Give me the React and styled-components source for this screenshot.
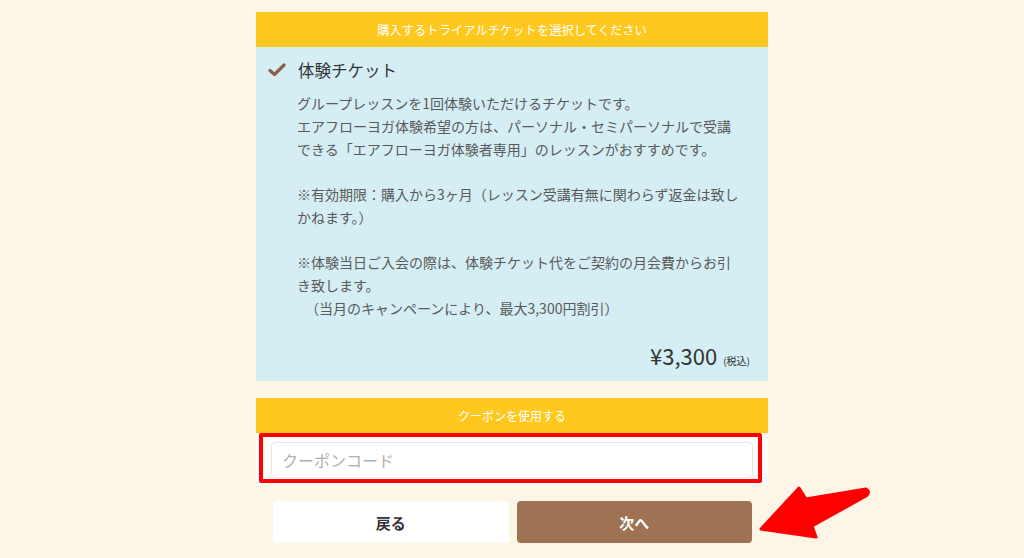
import React from "react";
import styled, { createGlobalStyle } from "styled-components";

const GlobalStyle = createGlobalStyle`
  html, body {
    margin: 0;
    padding: 0;
    background: #fdf6e6;
  }
  body {
    font-family: "Noto Sans CJK JP", "Noto Sans", sans-serif;
    color: #555;
  }
`;

const Page = styled.div`
  position: relative;
  width: 1024px;
  height: 558px;
  overflow: hidden;
  padding-top: 12px;
  box-sizing: border-box;
`;

const Column = styled.div`
  width: 512px;
  margin: 0 auto;
  display: flex;
  flex-direction: column;
`;

const SectionHead = styled.div`
  height: 35px;
  background: #ffc81f;
  color: #fff;
  font-size: ${(p) => (p.$small ? "12px" : "12.3px")};
  display: flex;
  align-items: center;
  justify-content: center;
  margin-top: ${(p) => (p.$gap ? "17px" : "0")};
`;

const TicketBody = styled.div`
  background: #d4eef3;
  padding: 11px 18px 11px 12px;
  display: flex;
  flex-direction: column;
`;

const TitleRow = styled.div`
  display: flex;
  align-items: center;
  gap: 12px;
  height: 24px;
`;

const CheckIcon = styled.svg`
  width: 18px;
  height: 16px;
  flex-shrink: 0;
`;

const Title = styled.div`
  font-size: 16.5px;
  color: #333;
  line-height: 24px;
`;

const Description = styled.div`
  margin: 10px 0 0 29px;
  font-size: 14px;
  line-height: 23px;
  color: #5a5a5a;
  white-space: nowrap;
`;

const Para = styled.p`
  margin: 0 0 22px;
  &:last-child {
    margin-bottom: 0;
  }
`;

const Indent = styled.span`
  padding-left: 8px;
`;

const PriceRow = styled.div`
  margin-top: 20px;
  height: 30px;
  display: flex;
  justify-content: flex-end;
  align-items: baseline;
  gap: 6px;
  color: #333;
  line-height: 30px;
  overflow: hidden;
`;

const Price = styled.span`
  font-size: 22px;
`;

const Tax = styled.span`
  font-size: 10px;
`;

const CouponBody = styled.div`
  background: #fff;
  padding: 0 6px 2px 3px;
`;

const Highlight = styled.div`
  border: 4.5px solid #ff0000;
  border-radius: 2px;
  padding: 5px 5px 1px 8px;
`;

const CouponInput = styled.input`
  display: block;
  width: 100%;
  box-sizing: border-box;
  height: 36px;
  border: 1px solid #e6e6e6;
  border-radius: 4px;
  padding: 0 10px;
  font-family: inherit;
  font-size: 16px;
  color: #333;
  outline: none;
  &::placeholder {
    color: #b0b0b0;
  }
`;

const ButtonRow = styled.div`
  margin: 16px 16px 0 17px;
  display: grid;
  grid-template-columns: 1fr 1fr;
  gap: 8px;
`;

const Button = styled.button`
  height: 42px;
  border: none;
  border-radius: 4px;
  font-family: inherit;
  font-size: 15px;
  font-weight: 700;
  background: ${(p) => (p.$primary ? "#9e7253" : "#fff")};
  color: ${(p) => (p.$primary ? "#fff" : "#333")};
  cursor: pointer;
`;

const Arrow = styled.svg`
  position: absolute;
  left: 750px;
  top: 480px;
  width: 130px;
  height: 70px;
`;

export default function App() {
  return (
    <Page>
      <GlobalStyle />
      <Column>
        <SectionHead>購入するトライアルチケットを選択してください</SectionHead>
        <TicketBody>
          <TitleRow>
            <CheckIcon viewBox="0 0 18 16">
              <path
                d="M2 8.5 L6.5 12.5 L16 3"
                fill="none"
                stroke="#8a624a"
                strokeWidth="3.2"
                strokeLinecap="round"
                strokeLinejoin="round"
              />
            </CheckIcon>
            <Title>体験チケット</Title>
          </TitleRow>
          <Description>
            <Para>
              グループレッスンを1回体験いただけるチケットです。
              <br />
              エアフローヨガ体験希望の方は、パーソナル・セミパーソナルで受講
              <br />
              できる「エアフローヨガ体験者専用」のレッスンがおすすめです。
            </Para>
            <Para>
              ※有効期限：購入から3ヶ月（レッスン受講有無に関わらず返金は致し
              <br />
              かねます。）
            </Para>
            <Para>
              ※体験当日ご入会の際は、体験チケット代をご契約の月会費からお引
              <br />
              き致します。
              <br />
              <Indent>（当月のキャンペーンにより、最大3,300円割引）</Indent>
            </Para>
          </Description>
          <PriceRow>
            <Price>¥3,300</Price>
            <Tax>(税込)</Tax>
          </PriceRow>
        </TicketBody>

        <SectionHead $gap $small>クーポンを使用する</SectionHead>
        <CouponBody>
          <Highlight>
            <CouponInput placeholder="クーポンコード" />
          </Highlight>
        </CouponBody>

        <ButtonRow>
          <Button>戻る</Button>
          <Button $primary>次へ</Button>
        </ButtonRow>
      </Column>

      <Arrow viewBox="750 480 130 70">
        <path
          d="M761 529 L799 488 L806 499 L866 489 Q871 492 866 496 L812 526 L816 537 Z"
          fill="#ff0000"
          stroke="#ff0000"
          strokeWidth="3"
          strokeLinejoin="round"
        />
      </Arrow>
    </Page>
  );
}
